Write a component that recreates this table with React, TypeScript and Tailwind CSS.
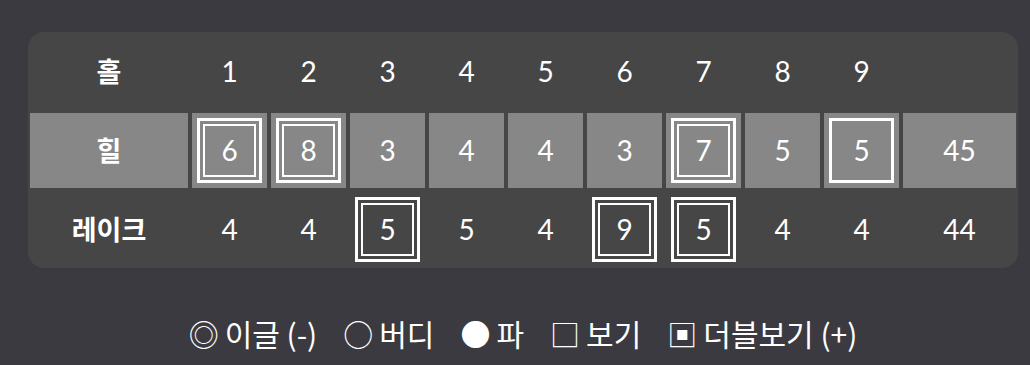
import React from 'react'

type Mark = 'none' | 'single' | 'double'

interface Player {
  name: string
  scores: { value: number; mark: Mark }[]
  total: number
  shaded: boolean
}

const holes = [1, 2, 3, 4, 5, 6, 7, 8, 9]

const players: Player[] = [
  {
    name: '힐',
    shaded: true,
    total: 45,
    scores: [
      { value: 6, mark: 'double' },
      { value: 8, mark: 'double' },
      { value: 3, mark: 'none' },
      { value: 4, mark: 'none' },
      { value: 4, mark: 'none' },
      { value: 3, mark: 'none' },
      { value: 7, mark: 'double' },
      { value: 5, mark: 'none' },
      { value: 5, mark: 'single' },
    ],
  },
  {
    name: '레이크',
    shaded: false,
    total: 44,
    scores: [
      { value: 4, mark: 'none' },
      { value: 4, mark: 'none' },
      { value: 5, mark: 'double' },
      { value: 5, mark: 'none' },
      { value: 4, mark: 'none' },
      { value: 9, mark: 'double' },
      { value: 5, mark: 'double' },
      { value: 4, mark: 'none' },
      { value: 4, mark: 'none' },
    ],
  },
]

const legend = [
  { sym: '◎', label: '이글 (-)' },
  { sym: '○', label: '버디' },
  { sym: '●', label: '파' },
  { sym: '□', label: '보기' },
  { sym: '▣', label: '더블보기 (+)' },
]

const cjk = { fontFamily: "'Noto Sans CJK KR', sans-serif" }

function ScoreMark({ value, mark }: { value: number; mark: Mark }) {
  if (mark === 'double') {
    return (
      <div className="w-[65px] h-[65px] border-[3px] border-white p-[3px]">
        <div className="w-full h-full border-2 border-white flex items-center justify-center pb-[2px]">
          {value}
        </div>
      </div>
    )
  }
  if (mark === 'single') {
    return (
      <div className="w-[65px] h-[65px] border-[3px] border-white flex items-center justify-center pb-[2px]">
        {value}
      </div>
    )
  }
  return <span className="pb-[2px]">{value}</span>
}

export default function App() {
  return (
    <div
      className="w-[1030px] h-[365px] bg-[#3b3a40] pl-7 pr-3 pt-8 text-white"
      style={{ fontFamily: "Lato, 'Noto Sans CJK KR', sans-serif" }}
    >
      <div className="bg-[#464646] rounded-2xl pt-[2px] pb-[1px] px-[2px] grid grid-cols-[158px_repeat(9,75px)_1fr] auto-rows-[75px] gap-1 text-[28px]">
        <div className="flex items-center justify-center font-semibold text-[27px]" style={cjk}>
          홀
        </div>
        {holes.map((h) => (
          <div key={h} className="flex items-center justify-center pb-[2px]">
            {h}
          </div>
        ))}
        <div />

        {players.map((p) => (
          <React.Fragment key={p.name}>
            <div
              className={`flex items-center justify-center font-semibold text-[27px] ${p.shaded ? 'bg-[#878787]' : ''}`}
              style={cjk}
            >
              {p.name}
            </div>
            {p.scores.map((s, i) => (
              <div
                key={i}
                className={`flex items-center justify-center ${p.shaded ? 'bg-[#878787]' : ''}`}
              >
                <ScoreMark value={s.value} mark={s.mark} />
              </div>
            ))}
            <div className={`flex items-center justify-center pb-[2px] ${p.shaded ? 'bg-[#878787]' : ''}`}>
              {p.total}
            </div>
          </React.Fragment>
        ))}
      </div>

      <div className="mt-[50px] flex justify-center gap-[26px] text-[30px] leading-none" style={cjk}>
        {legend.map((l) => (
          <div key={l.label} className="flex items-center gap-[6px]">
            <span>{l.sym}</span>
            <span>{l.label}</span>
          </div>
        ))}
      </div>
    </div>
  )
}
